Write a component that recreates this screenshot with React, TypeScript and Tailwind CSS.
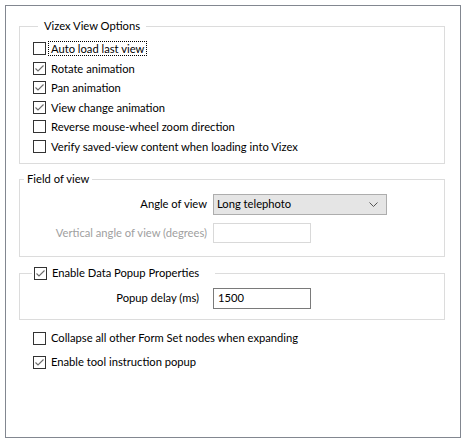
import React from "react";

function Check({ checked }: { checked: boolean }) {
  return (
    <span className="w-[13px] h-[13px] border border-[#333333] bg-white flex items-center justify-center shrink-0">
      {checked && (
        <svg width="11" height="11" viewBox="0 0 11 11">
          <path d="M1.5 5.5 L4 8 L9.5 2.5" fill="none" stroke="#6b6b6b" strokeWidth="1.1" />
        </svg>
      )}
    </span>
  );
}

function Row({ checked, label, focus }: { checked: boolean; label: string; focus?: boolean }) {
  return (
    <div className="flex items-center h-[19.5px]">
      <Check checked={checked} />
      <span
        className={
          "ml-[3px] px-[2px] leading-[13px] " +
          (focus ? "outline outline-1 outline-dotted outline-[#000]" : "")
        }
      >
        {label}
      </span>
    </div>
  );
}

export default function App() {
  return (
    <div
      className="w-[467px] h-[448px] bg-white pt-[5px] pl-[5px] text-[11.2px] text-black"
      style={{ fontFamily: '"Segoe UI", Lato, sans-serif' }}
    >
      <div className="w-[456px] h-[433px] border border-[#828790] pl-[13px] pr-[15px] flex flex-col">
        <fieldset className="mt-[12px] border border-[#dcdcdc] pl-[13px] pb-[7px]">
          <legend className="ml-[5px] px-[6px] leading-[16px]">Vizex View Options</legend>
          <div className="flex flex-col pt-[5px]">
            <Row checked={false} label="Auto load last view" focus />
            <Row checked={true} label="Rotate animation" />
            <Row checked={true} label="Pan animation" />
            <Row checked={true} label="View change animation" />
            <Row checked={false} label="Reverse mouse-wheel zoom direction" />
            <Row checked={false} label="Verify saved-view content when loading into Vizex" />
          </div>
        </fieldset>

        <fieldset className="mt-[7px] border border-[#dcdcdc] pb-[13px]">
          <legend className="ml-[4px] px-[3px] leading-[16px]">Field of view</legend>
          <div className="flex items-center mt-[7px]">
            <span className="w-[187px] text-right">Angle of view</span>
            <div className="ml-[6px] w-[174px] h-[21px] bg-[#e5e5e5] border border-[#adadad] flex items-center pl-[3px] pr-[8px]">
              <span className="flex-1">Long telephoto</span>
              <svg width="9" height="6" viewBox="0 0 9 6">
                <path d="M0.5 0.5 L4.5 4.5 L8.5 0.5" fill="none" stroke="#555" strokeWidth="1" />
              </svg>
            </div>
          </div>
          <div className="flex items-center mt-[8px]">
            <span className="w-[187px] text-right text-[#a0a0a0]">Vertical angle of view (degrees)</span>
            <div className="ml-[6px] w-[98px] h-[20px] border border-[#d9d9d9] bg-white" />
          </div>
        </fieldset>

        <fieldset className="mt-[8px] border border-[#dcdcdc] pb-[10px]">
          <legend className="ml-[12px] pl-[2px] pr-[16px] leading-[16px] flex items-center">
            <Check checked={true} />
            <span className="ml-[5px]">Enable Data Popup Properties</span>
          </legend>
          <div className="flex items-center mt-[7px]">
            <span className="w-[179px] text-right">Popup delay (ms)</span>
            <div className="ml-[14px] w-[98px] h-[21px] border border-[#7a7a7a] bg-white flex items-center pl-[4px]">
              1500
            </div>
          </div>
        </fieldset>

        <div className="flex flex-col pl-[14px] mt-[6px]">
          <div className="flex items-center h-[24px]">
            <Check checked={false} />
            <span className="ml-[5px]">Collapse all other Form Set nodes when expanding</span>
          </div>
          <div className="flex items-center h-[24px]">
            <Check checked={true} />
            <span className="ml-[5px]">Enable tool instruction popup</span>
          </div>
        </div>
      </div>
    </div>
  );
}
